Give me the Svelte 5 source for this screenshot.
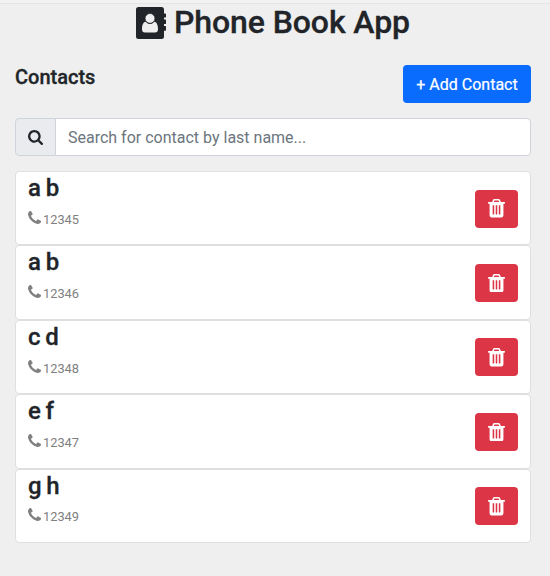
<script>
  const contacts = [
    { name: 'a b', phone: '12345' },
    { name: 'a b', phone: '12346' },
    { name: 'c d', phone: '12348' },
    { name: 'e f', phone: '12347' },
    { name: 'g h', phone: '12349' },
  ];
</script>

<div class="page">
  <header>
    <svg class="book" viewBox="0 0 30 32" aria-hidden="true">
      <path fill="#212529" d="M2.500 0H25.500Q28 0 28 2.500V6.500H29.4Q30 6.5 30 7.1V10Q30 10.6 29.4 10.6H28V12.6H29.4Q30 12.6 30 13.2V16.4Q30 17 29.4 17H28V19H29.4Q30 19 30 19.6V23.1Q30 23.7 29.4 23.7H28V29.5Q28 32 25.5 32H2.5Q0 32 0 29.5V2.5Q0 0 2.5 0Z" />
      <path fill="#efefef" d="M9.7 14.8Q11.5 17 14 17T18.3 14.8C21 15.1 22 18.5 22 22Q22 25.5 19 25.5H9Q6 25.5 6 22C6 18.5 7 15.1 9.7 14.8Z" />
      <circle cx="14" cy="11.4" r="4.9" fill="#efefef" stroke="#212529" stroke-width=".7" />
    </svg>
    <h1>Phone Book App</h1>
  </header>

  <div class="bar">
    <h2>Contacts</h2>
    <button class="add">+ Add Contact</button>
  </div>

  <div class="search">
    <span class="addon">
      <svg viewBox="64 128 1664 1664" width="15" height="15" aria-hidden="true"><path fill="#212529" d="M1216 832q0-185-131.5-316.5t-316.5-131.5-316.5 131.5-131.5 316.5 131.5 316.5 316.5 131.5 316.5-131.5 131.5-316.5zm512 832q0 52-38 90t-90 38q-54 0-90-38l-343-342q-179 124-399 124-143 0-273.5-55.5t-225-150-150-225-55.5-273.5 55.5-273.5 150-225 225-150 273.5-55.5 273.5 55.5 225 150 150 225 55.5 273.5q0 220-124 399l343 343q37 37 37 90z" /></svg>
    </span>
    <input type="text" placeholder="Search for contact by last name..." />
  </div>

  <ul>
    {#each contacts as c}
      <li>
        <div>
          <h3>{c.name}</h3>
          <p>
            <svg viewBox="192 128 1408 1408" aria-hidden="true"><path fill="#808080" d="M1600 1240q0 27-10 70.5t-21 68.5q-21 50-122 106-94 51-186 51-27 0-53-3.5t-57.5-12.5-47-14.5-55.5-20.5-49-18q-98-35-175-83-127-79-264-216t-216-264q-48-77-83-175-3-9-18-49t-20.5-55.5-14.5-47-12.5-57.5-3.5-53q0-92 51-186 56-101 106-122 25-11 68.5-21t70.5-10q14 0 21 3 18 6 53 76 11 19 30 54t35 63.5 31 53.5q3 4 17.5 25t21.5 35.5 7 28.5q0 20-28.5 50t-62 55-62 53-28.5 46q0 9 5 22.5t8.5 20.5 14 24 11.5 19q76 137 174 235t235 174q2 1 19 11.5t24 14 20.5 8.5 22.5 5q18 0 46-28.5t53-62 55-62 50-28.5q14 0 28.5 7t35.5 21.5 25 17.5q25 15 53.5 31t63.5 35 54 30q70 35 76 53 3 7 3 21z" /></svg>
            <span>{c.phone}</span>
          </p>
        </div>
        <button class="delete" aria-label="Delete contact">
          <svg viewBox="192 128 1408 1536" aria-hidden="true"><path fill="#fff" fill-rule="evenodd" d="M704 1376v-704q0-14-9-23t-23-9h-64q-14 0-23 9t-9 23v704q0 14 9 23t23 9h64q14 0 23-9t9-23zm256 0v-704q0-14-9-23t-23-9h-64q-14 0-23 9t-9 23v704q0 14 9 23t23 9h64q14 0 23-9t9-23zm256 0v-704q0-14-9-23t-23-9h-64q-14 0-23 9t-9 23v704q0 14 9 23t23 9h64q14 0 23-9t9-23zm-544-992h448l-48-117q-7-9-17-11h-317q-10 2-17 11zm928 32v64q0 14-9 23t-23 9h-96v948q0 83-47 143.5t-113 60.5h-832q-66 0-113-58.5t-47-141.5v-952h-96q-14 0-23-9t-9-23v-64q0-14 9-23t23-9h309l70-167q15-37 54-63t79-26h320q40 0 79 26t54 63l70 167h309q14 0 23 9t9 23z" /></svg>
        </button>
      </li>
    {/each}
  </ul>
</div>

<style>
  :global(body) { background: #efefef; }
  .page {
    box-sizing: border-box;
    height: 576px;
    padding: 0 19px 0 15px;
    overflow: hidden;
    background: linear-gradient(#f2f2f2 3px, #e5e5e5 3px, #e5e5e5 4px, #efefef 4px);
    font-family: Roboto, sans-serif;
    color: #212529;
  }
  h1, h2, h3, p, ul { margin: 0; padding: 0; }
  h1, h2, h3 { font-weight: 500; line-height: 1.2; -webkit-text-stroke: 0.3px #212529; }
  header {
    display: flex;
    justify-content: center;
    align-items: center;
    gap: 8px;
    height: 45px;
  }
  h1 { font-size: 32px; letter-spacing: -0.1px; white-space: nowrap; }
  .book { width: 30px; height: 32px; }
  .bar {
    display: flex;
    justify-content: space-between;
    align-items: flex-start;
    padding-top: 20px;
  }
  h2 { font-size: 20px; }
  button { border: 0; border-radius: 4px; font-family: inherit; }
  .add {
    width: 128px;
    height: 38px;
    padding: 0;
    background: #0a6cff;
    color: #fff;
    font-size: 16px;
    white-space: nowrap;
    -webkit-text-stroke: 0.2px #fff;
  }
  .search { display: flex; height: 38px; margin: 15px 0; }
  .addon {
    box-sizing: border-box;
    display: flex;
    align-items: center;
    justify-content: center;
    width: 41px;
    background: #e9ebef;
    border: 1px solid #ced4da;
    border-radius: 4px 0 0 4px;
  }
  input {
    box-sizing: border-box;
    flex: 1;
    min-width: 0;
    margin-left: -1px;
    padding: 0 12px;
    border: 1px solid #ced4da;
    border-radius: 0 4px 4px 0;
    background: #fff;
    font: 16px Roboto, sans-serif;
  }
  input::placeholder { color: #6c757d; opacity: 1; }
  ul { list-style: none; }
  li {
    box-sizing: border-box;
    display: flex;
    justify-content: space-between;
    align-items: center;
    height: 74.4px;
    padding: 1px 12px 0;
    background: #fff;
    border: 1px solid #dfdfdf;
    border-radius: 4px;
  }
  li > div { align-self: flex-start; padding-top: 1px; }
  h3 { font-size: 24px; letter-spacing: -0.6px; }
  p { display: flex; gap: 2px; margin-top: 8px; color: #808080; font-size: 12.8px; line-height: 18px; }
  p svg { width: 13px; height: 13px; }
  .delete {
    display: flex;
    align-items: center;
    justify-content: center;
    width: 43px;
    height: 38px;
    padding: 0;
    background: #dc3545;
  }
  .delete svg { width: 17px; height: 18.5px; }
</style>
